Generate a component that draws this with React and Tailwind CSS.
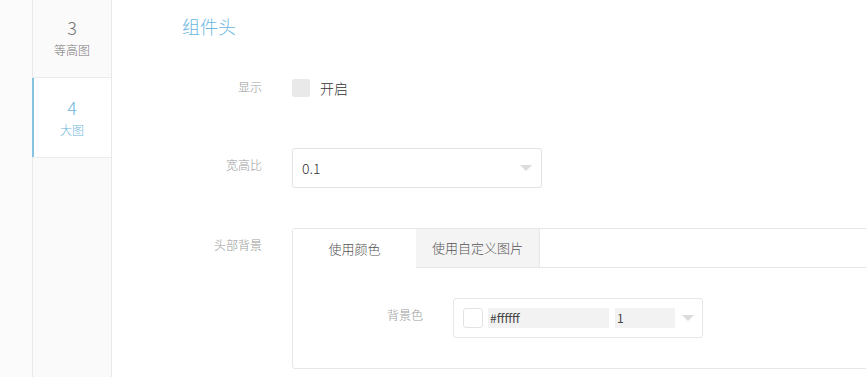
import React, { useState } from 'react';

const FONT = { fontFamily: '"Noto Sans CJK SC", "Liberation Sans", sans-serif' };

const NAV = [
  { num: '3', label: '等高图' },
  { num: '4', label: '大图' },
];

const Caret = ({ className }) => (
  <svg className={className} width="12" height="6" viewBox="0 0 12 6">
    <path d="M0 0 L12 0 L6 6 Z" fill="#dcdcdc" />
  </svg>
);

const FormRow = ({ label, children, className = '' }) => (
  <div className={`flex items-start ${className}`}>
    <div className="w-[80px] shrink-0 text-right text-[12px] leading-[34px] font-light text-[#9a9a9a] mr-[30px]">
      {label}
    </div>
    <div className="flex-1 min-w-0">{children}</div>
  </div>
);

export default function App() {
  const [active, setActive] = useState(1);
  const [tab, setTab] = useState(0);
  const [enabled, setEnabled] = useState(false);

  return (
    <div className="flex h-[377px] w-[866px] overflow-hidden bg-white" style={FONT}>
      {/* left gutter */}
      <div className="w-[32px] shrink-0 bg-[#fbfbfb]" />

      {/* step nav */}
      <div className="w-[80px] shrink-0 border-x border-[#e9e9e9] bg-[#fafafa]">
        <div className="-mt-[2px]">
          {NAV.map((item, i) => (
            <button
              key={item.num}
              onClick={() => setActive(i)}
              className={`relative flex h-[80px] w-full flex-col items-center border-b border-[#ececec] pt-[17px] font-light ${
                active === i ? 'bg-white text-[#6db5dc]' : 'text-[#777]'
              }`}
            >
              {active === i && <span className="absolute -left-px top-0 bottom-0 w-[2px] bg-[#86c2e2]" />}
              <span className="text-[18px] leading-[24px]">{item.num}</span>
              <span className="text-[12px] leading-[16px] mt-[3px]">{item.label}</span>
            </button>
          ))}
        </div>
      </div>

      {/* main */}
      <div className="flex-1 min-w-0 overflow-hidden pl-[70px]">
        <h2 className="pt-[14px] text-[18px] leading-[24px] font-light text-[#6cb7df]">组件头</h2>

        <FormRow label="显示" className="mt-[32px]">
          <label className="flex h-[36px] items-center cursor-pointer" onClick={() => setEnabled(!enabled)}>
            <span className={`h-[18px] w-[18px] rounded-[2px] ${enabled ? 'bg-[#6cb7df]' : 'bg-[#e9e9e9]'}`} />
            <span className="ml-[10px] text-[14px] font-light text-[#333]">开启</span>
          </label>
        </FormRow>

        <FormRow label="宽高比" className="mt-[42px]">
          <div className="flex h-[40px] w-[250px] items-center justify-between rounded-[3px] border border-[#e3e3e3] pl-[9px] pr-[9px]">
            <span className="text-[14px] font-light text-[#333]">0.1</span>
            <Caret />
          </div>
        </FormRow>

        <FormRow label="头部背景" className="mt-[40px]">
          <div className="w-[640px] rounded-[3px] border border-[#e6e6e6]">
            <div className="flex h-[39px]">
              {['使用颜色', '使用自定义图片'].map((t, i) => (
                <button
                  key={t}
                  onClick={() => setTab(i)}
                  className={`text-[13px] font-light text-[#555] ${i === 0 ? 'w-[123px]' : 'w-[124px]'} ${
                    tab === i ? 'bg-white' : 'bg-[#f4f4f4] border-b border-[#e6e6e6]'
                  } ${i === 1 ? 'border-r border-[#e6e6e6]' : ''}`}
                >
                  {t}
                </button>
              ))}
              <div className="flex-1 border-b border-[#e6e6e6]" />
            </div>

            <div className="h-[100px] pt-[30px] pl-[50px]">
              <FormRow label="背景色">
                <div className="flex h-[40px] w-[250px] items-center rounded-[3px] border border-[#e6e6e6] pl-[9px]">
                  <span className="h-[20px] w-[20px] rounded-[3px] border border-[#e3e3e3] bg-white" />
                  <span className="ml-[5px] flex h-[20px] w-[121px] items-center bg-[#f2f2f2] pl-[2px] text-[12px] text-[#444]">
                    #ffffff
                  </span>
                  <span className="ml-[6px] flex h-[20px] w-[60px] items-center bg-[#f2f2f2] pl-[2px] text-[12px] text-[#444]">
                    1
                  </span>
                  <Caret className="ml-[7px]" />
                </div>
              </FormRow>
            </div>
          </div>
        </FormRow>
      </div>
    </div>
  );
}
